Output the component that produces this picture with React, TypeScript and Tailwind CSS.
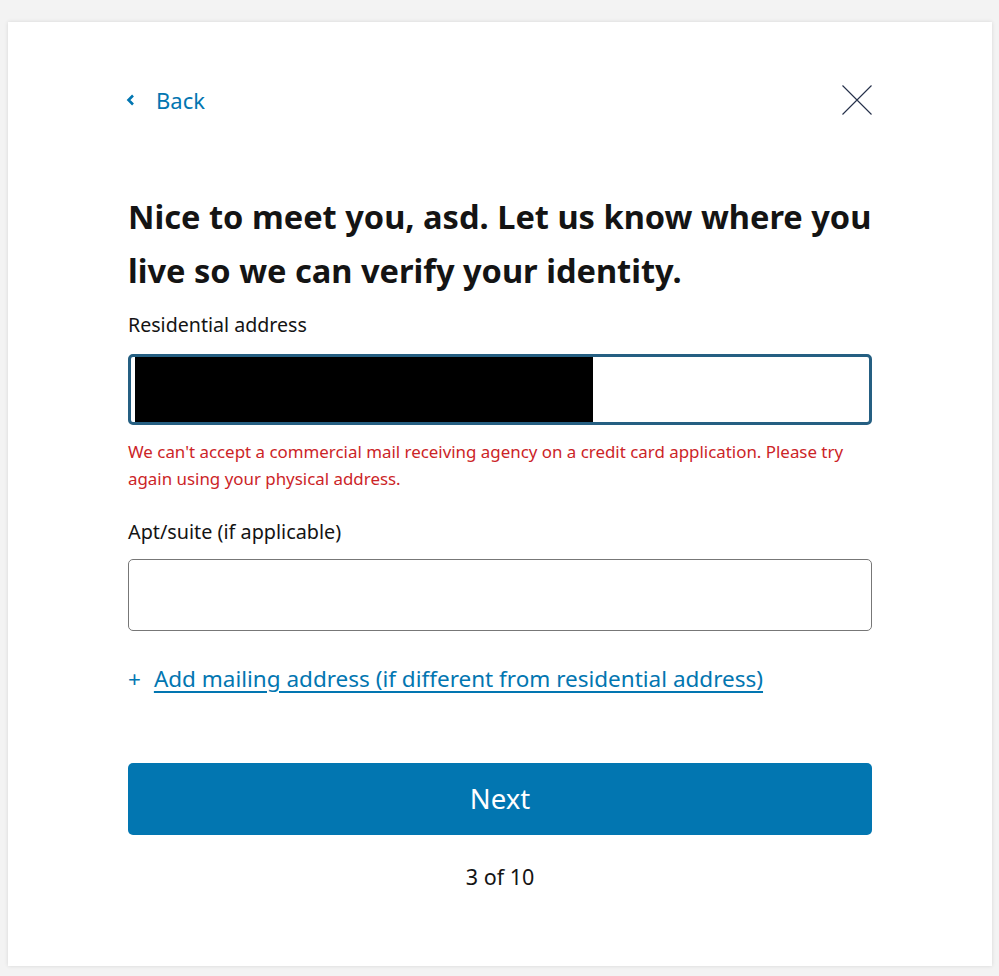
import React from "react";

export default function App() {
  const font = { fontFamily: '"Noto Sans", "Open Sans", sans-serif' };
  return (
    <div className="min-h-screen bg-[#f3f3f3] pt-[22px] pl-[8px]" style={font}>
      <div className="w-[984px] h-[944px] bg-white shadow-[0_0_4px_rgba(0,0,0,0.12)] px-[120px] pt-[63px]">
        <div className="flex items-center justify-between h-[30px]">
          <button className="flex items-center text-[#0276b1] text-[22px] leading-none">
            <svg width="10" height="12" viewBox="0 0 10 12" className="ml-[-2px] mr-[20px]">
              <path d="M7 1.5 L2.5 6 L7 10.5" fill="none" stroke="#0276b1" strokeWidth="2.6" />
            </svg>
            <span>Back</span>
          </button>
          <svg width="30" height="30" viewBox="0 0 30 30">
            <path d="M0.5 0.5 L29.5 29.5 M29.5 0.5 L0.5 29.5" stroke="#25304a" strokeWidth="1.1" />
          </svg>
        </div>
        <h1 className="mt-[75px] text-[32.6px] leading-[54px] font-bold text-[#141414]">
          Nice to meet you, asd. Let us know where you live so we can verify your identity.
        </h1>
        <div className="mt-[15px] text-[19.6px] leading-[24px] text-[#141414]">Residential address</div>
        <div className="mt-[17px] h-[71px] rounded-[5px] border-[3px] border-[#255f82] flex items-stretch pl-[4px]">
          <div className="w-[458px] bg-black" />
        </div>
        <div className="mt-[13px] text-[16.9px] leading-[27px] text-[#cc2427]">
          We can't accept a commercial mail receiving agency on a credit card application. Please try again using your physical address.
        </div>
        <div className="mt-[28px] text-[19.8px] leading-[24px] text-[#141414]">Apt/suite (if applicable)</div>
        <div className="mt-[15px] h-[72px] rounded-[5px] border border-[#777777]" />
        <div className="mt-[33px] flex items-center text-[22.5px] leading-[30px] text-[#0276b1]">
          <span className="mr-[13px]">+</span>
          <a className="underline underline-offset-[4px] decoration-[1.5px]">Add mailing address (if different from residential address)</a>
        </div>
        <button className="mt-[69px] w-full h-[72px] rounded-[5px] bg-[#0276b1] text-white text-[27.5px]">Next</button>
        <div className="mt-[28px] text-center text-[21.5px] leading-[28px] text-[#141414]">3 of 10</div>
      </div>
    </div>
  );
}
